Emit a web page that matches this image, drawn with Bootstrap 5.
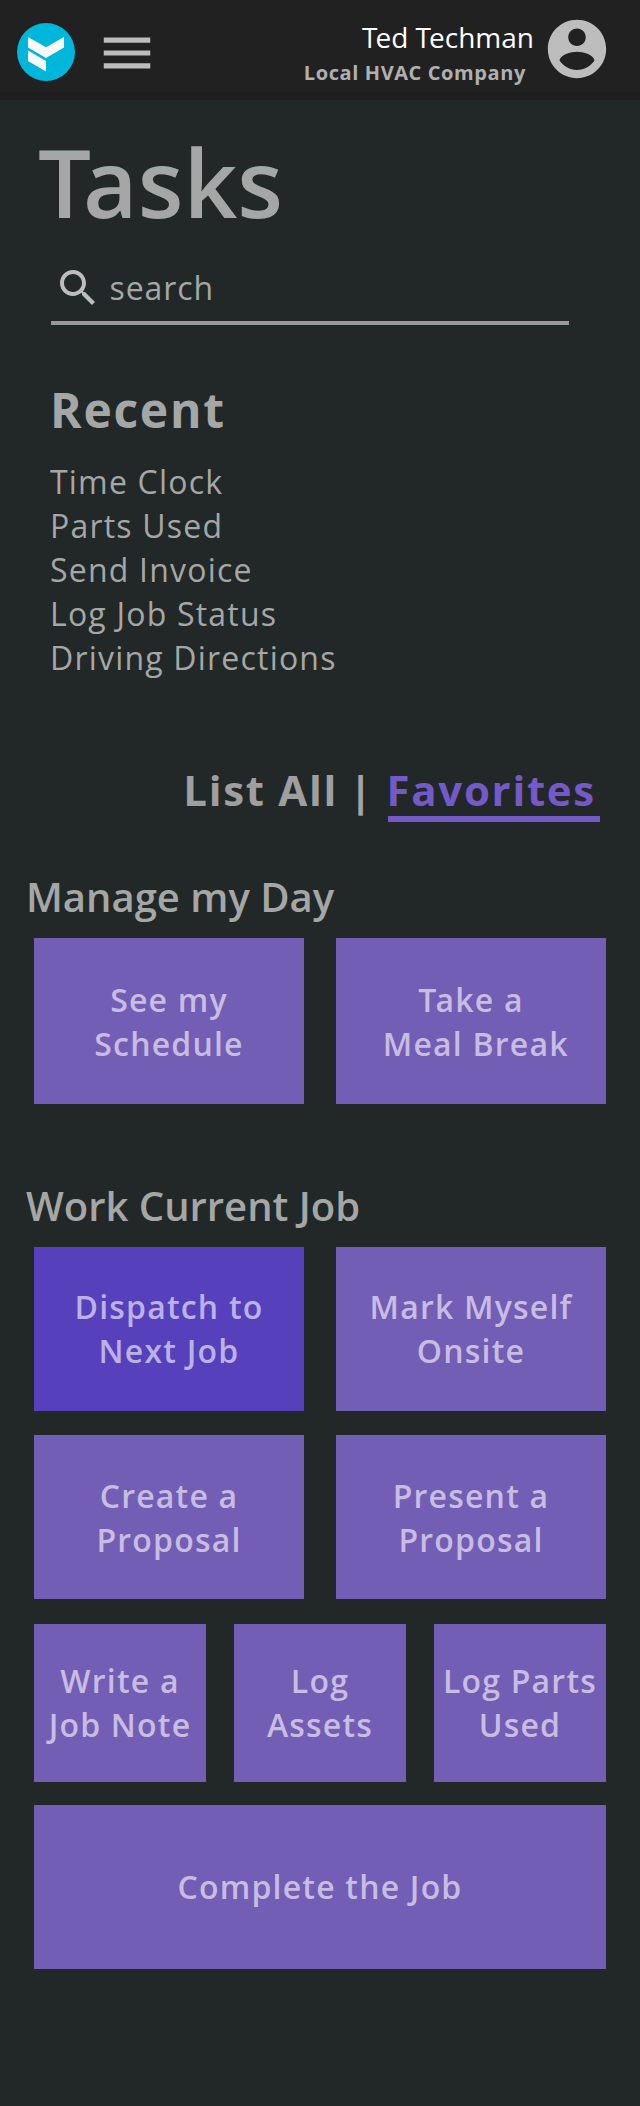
<!DOCTYPE html>
<html lang="en">
<head>
<meta charset="utf-8">
<meta name="viewport" content="width=device-width, initial-scale=1">
<title>Tasks</title>
<link href="https://cdn.jsdelivr.net/npm/bootstrap@5.3.0/dist/css/bootstrap.min.css" rel="stylesheet">
<style>
body{background:#222727;color:#a5a7a6;font-family:"Open Sans",sans-serif;font-size:32px;line-height:44px;min-height:2106px}
.topbar{height:100px;background:linear-gradient(#212121 91px,#1e1e1e 93px,#1f1f1f);padding:0 28px 0 17px}
.topbar svg{display:block;flex:none}
.brand-logo{margin-top:23px}
.menu-btn{margin:22px 0 0 21px}
.avatar{margin-top:14px}
.who{margin:18px 8px 0 0}
.who-name{font-size:28px;line-height:38px;color:#fff}
.who-name .cap{letter-spacing:-2px}
.who-org{font-size:20px;line-height:34px;font-weight:700;color:#b0b0b0;letter-spacing:.6px;margin-right:8px}
.page-title{font-size:94px;line-height:120px;font-weight:600;margin:22px 0 0 38px}
.page-title .cap{letter-spacing:-8px}
.search-box{margin:13px 71px 0 51px;height:70px;border-bottom:4px solid #999797}
.search-box svg{margin-left:3px}
.search-box span{letter-spacing:.9px;margin-left:7.500px}
.recent{margin:53px 0 0 50px}
.recent h2{font-size:48px;line-height:64px;font-weight:700;letter-spacing:1.7px;margin-bottom:18px}
.recent li{letter-spacing:1.2px}
.tabs{margin:83px 40px 0 0;font-size:42px;line-height:53px;font-weight:700;letter-spacing:1.7px;height:59px;color:#a5a5a5}
.tabs a{text-decoration:none;color:#9f9f9f}
.tab-sep{width:25px;margin:0 14px 0 11px}
.tabs .active{color:#735ac7;border-bottom:6px solid #735ac7;width:212px;text-indent:-1.5px;white-space:nowrap}
.group-title{font-size:40px;line-height:54px;font-weight:600;margin:0 0 14px 26px}
.day{margin-top:48px}
.job{margin-top:75px}
.tiles{margin:0 34px;display:grid;justify-content:space-between}
.tile{background:#725eb5;color:#c8bce1;font-weight:600;letter-spacing:1.2px;text-align:center;white-space:nowrap;display:flex;align-items:center;justify-content:center}
.tile .cap{letter-spacing:-1px}
.tile.current{background:#5640bc;color:#bbb1e3}
.one{grid-template-columns:572px}
.two{grid-template-columns:270px 270px}
.three{grid-template-columns:repeat(3,172px)}
.h166{height:166px}
.h166 .tile,.gap-a .tile{padding-top:2px}
.h164{height:164px}
.h158{height:158px}
.gap-a{margin-top:24px}
.gap-b{margin-top:25px}
.gap-c{margin-top:23px}
</style>
<script src="https://cdn.jsdelivr.net/npm/bootstrap@5.3.0/dist/js/bootstrap.bundle.min.js"></script>
</head>
<body>
<header class="topbar d-flex align-items-start">
  <svg class="brand-logo" width="58" height="58" viewBox="0 0 58 58"><circle cx="29" cy="29" r="29" fill="#00b6da"/><path fill="#f8f8f8" d="M11 14l18 10.300 18-10.300v10.500L29 35 11 24.500zM11 27.500l18 10.500v10.500L11 38z"/></svg>
  <svg class="menu-btn" width="62" height="62" viewBox="0 0 24 24" fill="#bdbdbd"><path d="M3 18h18v-2H3v2zm0-5h18v-2H3v2zm0-7v2h18V6H3z"/></svg>
  <div class="who ms-auto text-end">
    <div class="who-name"><span class="cap">T</span>ed <span class="cap">T</span>echman</div>
    <div class="who-org">Local HVAC Company</div>
  </div>
  <svg class="avatar" width="70" height="70" viewBox="0 0 24 24" fill="#bdbdbd"><path d="M12 2C6.480 2 2 6.480 2 12s4.480 10 10 10 10-4.480 10-10S17.520 2 12 2zm0 3c1.660 0 3 1.340 3 3s-1.340 3-3 3-3-1.340-3-3 1.340-3 3-3zm0 14.200c-2.500 0-4.710-1.280-6-3.220.030-1.990 4-3.080 6-3.080 1.990 0 5.970 1.090 6 3.080-1.290 1.940-3.500 3.220-6 3.220z"/></svg>
</header>
<main>
  <h1 class="page-title"><span class="cap">T</span>asks</h1>
  <div class="search-box d-flex align-items-center">
    <svg width="48" height="48" viewBox="0 0 24 24" fill="#bdbdbd"><path d="M15.500 14h-.790l-.280-.270C15.410 12.590 16 11.110 16 9.500 16 5.910 13.090 3 9.500 3S3 5.910 3 9.500 5.910 16 9.500 16c1.610 0 3.090-.590 4.230-1.570l.270.280v.790l5 4.990L20.490 19l-4.990-5zm-6 0C7.010 14 5 11.990 5 9.500S7.010 5 9.500 5 14 7.010 14 9.500 11.990 14 9.500 14z"/></svg>
    <span>search</span>
  </div>
  <section class="recent">
    <h2>Recent</h2>
    <ul class="list-unstyled mb-0">
      <li>Time Clock</li>
      <li>Parts Used</li>
      <li>Send Invoice</li>
      <li>Log Job Status</li>
      <li>Driving Directions</li>
    </ul>
  </section>
  <nav class="tabs d-flex justify-content-end">
    <a href="#">List All</a><span class="tab-sep">|</span><a href="#" class="active">Favorites</a>
  </nav>
  <section>
    <h3 class="group-title day">Manage my Day</h3>
    <div class="tiles two h166">
      <div class="tile"><div>See my<br>Schedule</div></div>
      <div class="tile"><div><span class="cap">T</span>ake a<br>&nbsp;Meal Break</div></div>
    </div>
  </section>
  <section>
    <h3 class="group-title job">Work Current Job</h3>
    <div class="tiles two h164">
      <div class="tile current"><div>Dispatch to<br>Next Job</div></div>
      <div class="tile"><div>Mark Myself<br>Onsite</div></div>
    </div>
    <div class="tiles two h164 gap-a">
      <div class="tile"><div>Create a<br>Proposal</div></div>
      <div class="tile"><div>Present a<br>Proposal</div></div>
    </div>
    <div class="tiles three h158 gap-b">
      <div class="tile"><div>Write a<br>Job Note</div></div>
      <div class="tile"><div>Log<br>Assets</div></div>
      <div class="tile"><div>Log Parts<br>Used</div></div>
    </div>
    <div class="tiles one h164 gap-c">
      <div class="tile">Complete the Job</div>
    </div>
  </section>
</main>
</body>
</html>
